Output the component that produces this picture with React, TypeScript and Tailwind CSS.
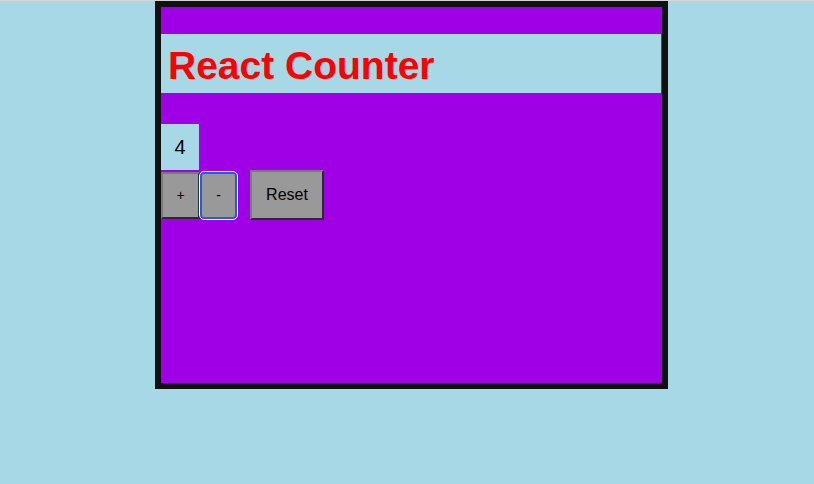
export default function App() {
  return (
    <div className="w-full h-[484px] bg-[#a6d8e6] border-t border-[#d6d6d6] font-['Liberation_Sans',Arial,sans-serif]">
      {/* Counter card */}
      <div className="ml-[155px] w-[513px] h-[388px] border-[6px] border-[#111111] bg-[#a000e6] pt-[27px]">
        <div className="w-[500px] h-[59px] bg-[#a6d8e6] pt-[9px] pl-[7px]">
          <h1 className="text-[39px] leading-[45px] font-bold text-[#ff0000]">React Counter</h1>
        </div>

        <div className="mt-[31px] w-[38px] h-[46px] bg-[#a6d8e6] flex items-center justify-center text-[20px] text-black">
          4
        </div>

        <div className="flex items-center h-[50px]">
          <button className="w-[39px] h-[47px] bg-[#999999] text-[14px] text-black border-2 border-t-[#7a7a7a] border-l-[#7a7a7a] border-b-[#2a2a2a] border-r-[#2a2a2a]">
            +
          </button>
          <button className="w-[37px] h-[47px] bg-[#999999] text-[14px] text-black rounded-[4px] border-2 border-[#1f5fd8] outline outline-1 outline-white">
            -
          </button>
          <button className="ml-[13px] w-[74px] h-[50px] bg-[#999999] text-[16px] text-black border-2 border-t-[#7a7a7a] border-l-[#7a7a7a] border-b-[#2a2a2a] border-r-[#2a2a2a]">
            Reset
          </button>
        </div>
      </div>
    </div>
  );
}
